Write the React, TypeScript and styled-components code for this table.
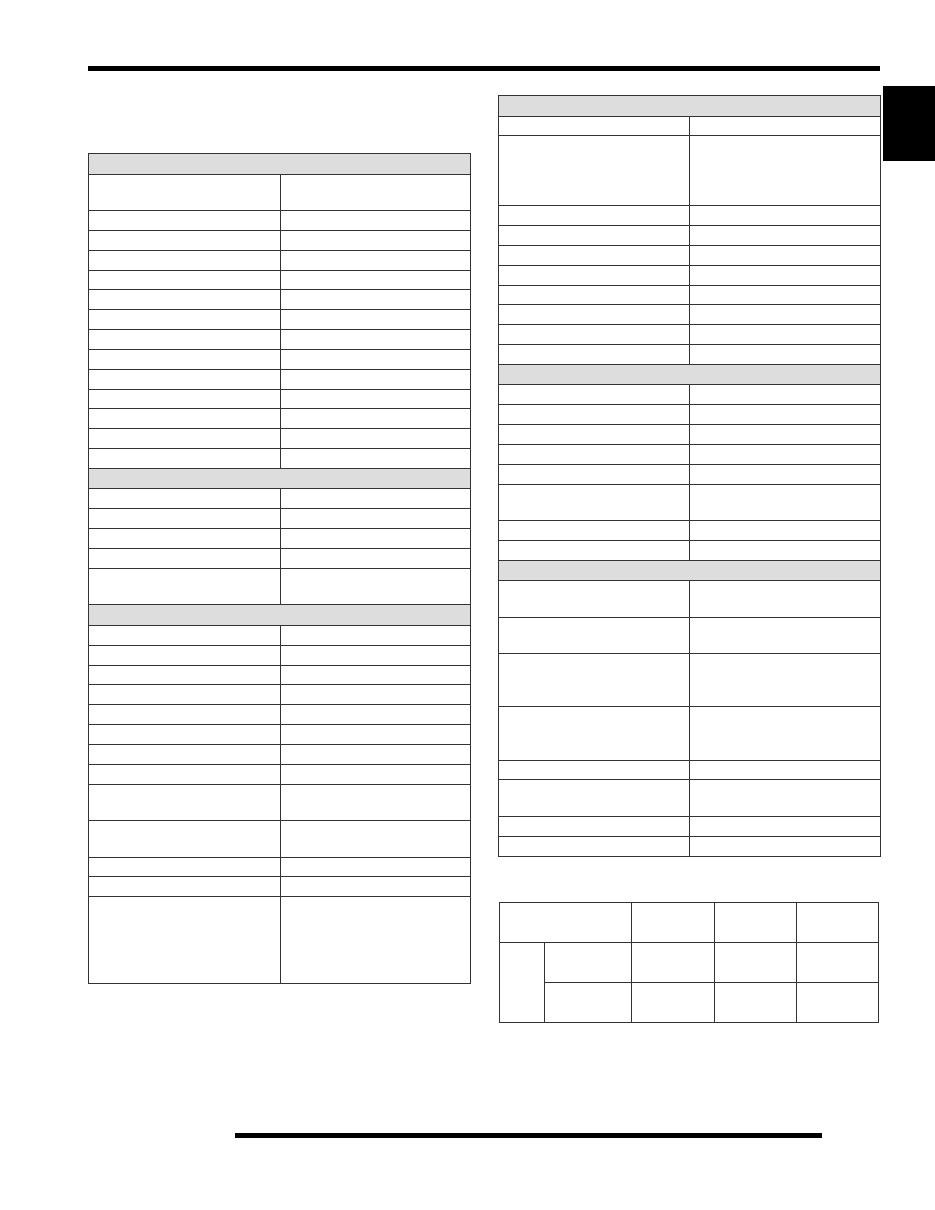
import React from "react";
import styled, { createGlobalStyle } from "styled-components";

const Global = createGlobalStyle`
  html, body { margin: 0; padding: 0; background: #ffffff; }
  body { font-family: "Liberation Sans", Arial, sans-serif; }
  * { box-sizing: border-box; }
`;

const LINE = "#333333";
const HEAD_BG = "#dddddd";

const Page = styled.div`
  width: 935px;
  height: 1210px;
  display: flex;
  flex-direction: column;
  padding-top: 66px;
  overflow: hidden;
  background: #fff;
`;

const TopRule = styled.div`
  margin-left: 88px;
  width: 792px;
  height: 5px;
  background: #000;
`;

const Body = styled.div`
  display: flex;
  align-items: flex-start;
`;

const Columns = styled.div`
  margin-left: 88px;
  width: 795px;
  display: flex;
  align-items: flex-start;
`;

const LeftCol = styled.div`
  width: 383px;
  margin-top: 82px;
`;

const RightCol = styled.div`
  width: 383px;
  margin-left: 26.7px;
  margin-top: 24px;
  display: flex;
  flex-direction: column;
`;

const ThumbTab = styled.div`
  width: 52px;
  height: 75.3px;
  margin-top: 14.7px;
  background: #000;
`;

const SpecTable = styled.div`
  border: 1px solid ${LINE};
  display: flex;
  flex-direction: column;
`;

const SectionHead = styled.div`
  height: 20.5px;
  background: ${HEAD_BG};
  border-top: 1px solid ${LINE};
  &:first-child {
    border-top: none;
    height: 19.5px;
  }
`;

const Row = styled.div<{ $h: number }>`
  height: ${(p) => p.$h}px;
  display: grid;
  grid-template-columns: 190.5px 1fr;
  border-top: 1px solid ${LINE};
`;

const Cell = styled.div`
  & + & {
    border-left: 1px solid ${LINE};
  }
`;

const rowHeight = (lines: number) => 3.2 + 16.65 * lines;

type Section = number[];

const SpecBlock: React.FC<{ sections: Section[] }> = ({ sections }) => (
  <SpecTable>
    {sections.map((rows, si) => (
      <React.Fragment key={si}>
        <SectionHead />
        {rows.map((n, ri) => (
          <Row key={ri} $h={rowHeight(n)}>
            <Cell />
            <Cell />
          </Row>
        ))}
      </React.Fragment>
    ))}
  </SpecTable>
);

const rep = (n: number, count: number) => Array.from({ length: count }, () => n);

const leftSections: Section[] = [
  [2, ...rep(1, 13)],
  [1, 1, 1, 1, 2],
  [...rep(1, 8), 2, 2, 1, 1, 5],
];

const rightSections: Section[] = [
  [1, 4, ...rep(1, 8)],
  [...rep(1, 5), 2, 1, 1],
  [2, 2, 3, 3, 1, 2, 1, 1],
];

const GridTable = styled.div`
  margin-top: 45.7px;
  margin-left: 1.6px;
  width: 379.7px;
  display: grid;
  grid-template-columns: 44px 86px 81.4px 81.6px 1fr;
  grid-template-rows: 39px 38.3px 39.3px;
  gap: 1px;
  padding: 1px;
  background: ${LINE};
`;

const GridCell = styled.div<{ $col?: string; $row?: string }>`
  background: #fff;
  grid-column: ${(p) => p.$col ?? "auto"};
  grid-row: ${(p) => p.$row ?? "auto"};
`;

const BottomRule = styled.div`
  margin-top: auto;
  margin-left: 234.7px;
  width: 587.3px;
  height: 5.3px;
  margin-bottom: 71.7px;
  background: #000;
`;

export default function App() {
  return (
    <>
      <Global />
      <Page>
        <TopRule />
        <Body>
          <Columns>
            <LeftCol>
              <SpecBlock sections={leftSections} />
            </LeftCol>
            <RightCol>
              <SpecBlock sections={rightSections} />
              <GridTable>
                <GridCell $col="1 / 3" $row="1" />
                <GridCell $col="3" $row="1" />
                <GridCell $col="4" $row="1" />
                <GridCell $col="5" $row="1" />
                <GridCell $col="1" $row="2 / 4" />
                <GridCell $col="2" $row="2" />
                <GridCell $col="3" $row="2" />
                <GridCell $col="4" $row="2" />
                <GridCell $col="5" $row="2" />
                <GridCell $col="2" $row="3" />
                <GridCell $col="3" $row="3" />
                <GridCell $col="4" $row="3" />
                <GridCell $col="5" $row="3" />
              </GridTable>
            </RightCol>
          </Columns>
          <ThumbTab />
        </Body>
        <BottomRule />
      </Page>
    </>
  );
}
